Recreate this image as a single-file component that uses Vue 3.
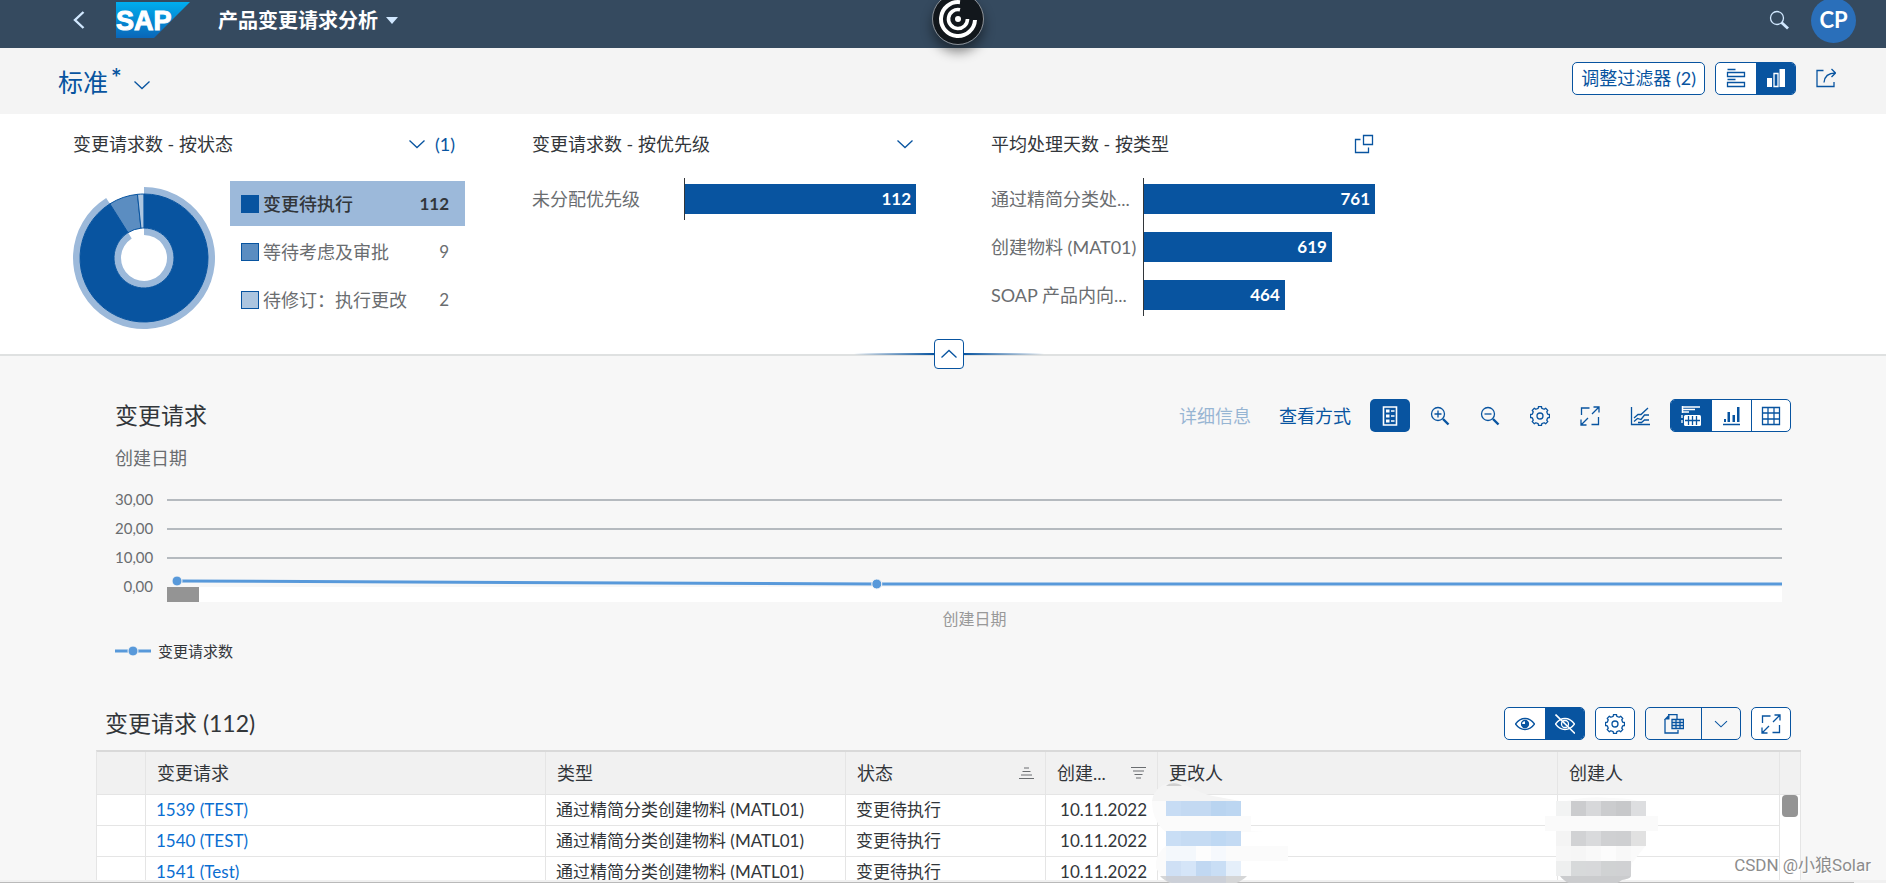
<script setup>
import { ref } from 'vue'

function gearPath(teeth, outer, root) {
  const points = []
  const step = (Math.PI * 2) / teeth
  for (let i = 0; i < teeth; i++) {
    const a = i * step - Math.PI / 2
    const corners = [[-0.3, root], [-0.2, outer], [0.2, outer], [0.3, root]]
    for (const [offset, r] of corners) {
      const t = a + offset * step
      points.push(`${(10 + r * Math.cos(t)).toFixed(2)} ${(10 + r * Math.sin(t)).toFixed(2)}`)
    }
  }
  return `M${points.join('L')}Z`
}
const gear = gearPath(8, 9.6, 7.9)

function ringPath(from, to, inner, outer) {
  const at = (deg, r) => {
    const t = ((deg - 90) * Math.PI) / 180
    return `${(71 + r * Math.cos(t)).toFixed(2)} ${(71 + r * Math.sin(t)).toFixed(2)}`
  }
  const large = to - from > 180 ? 1 : 0
  return `M${at(from, outer)}A${outer} ${outer} 0 ${large} 1 ${at(to, outer)}L${at(to, inner)}A${inner} ${inner} 0 ${large} 0 ${at(from, inner)}Z`
}

const statuses = [
  { label: '变更待执行', value: 112, tone: 'tone-a', selected: true },
  { label: '等待考虑及审批', value: 9, tone: 'tone-b', selected: false },
  { label: '待修订：执行更改', value: 2, tone: 'tone-c', selected: false },
]
const total = statuses.reduce((sum, s) => sum + s.value, 0)
let angle = 0
const slices = statuses.map((s) => {
  const from = angle
  angle += (s.value / total) * 360
  return { ...s, from, to: Math.min(angle, 359.9), path: ringPath(from, Math.min(angle, 359.9), 30, 64) }
})
const halo = [
  ringPath(slices[0].from, slices[0].to, 64, 71),
  ringPath(slices[0].from, slices[0].to, 23, 30),
]

const barPanels = [
  {
    title: '变更请求数 - 按优先级',
    icon: 'chevron-down',
    action: '选择优先级',
    max: 112,
    bars: [{ label: '未分配优先级', value: 112 }],
  },
  {
    title: '平均处理天数 - 按类型',
    icon: 'value-help',
    action: '打开值帮助',
    max: 761,
    bars: [
      { label: '通过精简分类处...', value: 761 },
      { label: '创建物料 (MAT01)', value: 619 },
      { label: 'SOAP 产品内向...', value: 464 },
    ],
  },
]

const chartTools = [
  { icon: 'zoom-in', label: '放大' },
  { icon: 'zoom-out', label: '缩小' },
  { icon: 'gear', label: '设置' },
  { icon: 'full-screen', label: '全屏' },
  { icon: 'line-chart', label: '图表类型' },
]
const viewMode = ref('both')
const viewModes = [
  { id: 'both', icon: 'chart-table', label: '图表和表' },
  { id: 'chart', icon: 'bar-chart', label: '图表' },
  { id: 'table', icon: 'grid', label: '表' },
]

const rows = [
  { id: '1539 (TEST)', type: '通过精简分类创建物料 (MATL01)', status: '变更待执行', date: '10.11.2022' },
  { id: '1540 (TEST)', type: '通过精简分类创建物料 (MATL01)', status: '变更待执行', date: '10.11.2022' },
  { id: '1541 (Test)', type: '通过精简分类创建物料 (MATL01)', status: '变更待执行', date: '10.11.2022' },
]

const mosaic = (lines, x, y) =>
  lines.flatMap((line, r) => line.map((fill, c) => ({ fill, x: x + c * 15, y: y + r * 15 }))).filter((c) => c.fill)

const changedBy = mosaic(
  [
    ['#c7dcf4', '#c3d9f2', '#c3d9f2', '#b9d4f0', '#bcd6f1'],
    [],
    ['#c9def5', '#c5dbf3', '#c5dbf3', '#bed8f3', '#c3daf3'],
    ['#f4f8fc', '#f4f8fc', '#fdfdfd', '#f6f9fd', '#fbfbfb'],
    ['#cfe0f5', '#d5e5f8', '#c1d8f2', '#c9def5', '#e5effa'],
  ],
  18,
  17,
)
const createdBy = mosaic(
  [
    ['#f2f3f3', '#cbccce', '#d7d8da', '#cbccce', '#c7c8ca', '#dddee0'],
    [],
    ['#f4f4f4', '#d1d2d4', '#d9dadc', '#cfd0d2', '#cecfd1', '#e1e1e1'],
    ['#f7f7f7', '#f6f6f6', '#f9f9f9', '#fcfcfc', '#f8f8f8'],
    ['#eeefef', '#d7d9da', '#d7d8da', '#d0d2d3', '#d0d1d3'],
  ],
  8,
  17,
)
</script>

<template>
  <div class="page">
    <svg class="sprite" aria-hidden="true">
      <symbol id="chevron-down" viewBox="0 0 20 20"><path d="M2.500 6.500 10 13.500 17.500 6.500" /></symbol>
      <symbol id="chevron-up" viewBox="0 0 20 20"><path d="M2.500 13.500 10 6.500 17.500 13.500" /></symbol>
      <symbol id="back" viewBox="0 0 20 20"><path d="M15.500 2 7 10 15.500 18" stroke-width="2.400" /></symbol>
      <symbol id="search" viewBox="0 0 20 20"><circle cx="8" cy="8" r="6.500" /><path d="M12.500 12.500 19 18.500" stroke-width="2.800" /></symbol>
      <symbol id="value-help" viewBox="0 0 20 20"><path d="M9.500 1.500h9v9h-9zM6.500 5.500h-5v13h13v-5" /></symbol>
      <symbol id="filter-bar" viewBox="0 0 20 20"><path d="M1.500 1.500h8M1.500 4.500h17v4h-17zM1.500 11.500h8M1.500 14.500h17v4h-17z" /></symbol>
      <symbol id="kpi-chart" viewBox="0 0 20 20"><path d="M1 10h5v9H1zM13.500 1H19v18h-5.500z" fill="currentColor" stroke="none" /><path d="M8 5.500h4v13H8z" /></symbol>
      <symbol id="share" viewBox="0 0 20 20"><path d="M7.500 2.500H1v16h17V14M8 14.500C8.500 8.500 12 5 19.500 5M15.500 1l4 4-4 4" /></symbol>
      <symbol id="legend" viewBox="0 0 20 20"><path d="M3.500 1h13v18h-13z" stroke-width="1.600" /><path d="M6 3.500h3.500v3H6zM6 8.500h3.500v3H6zM6 13.500h3.500v3H6z" fill="currentColor" stroke="none" /><path d="M11 5h3.500M11 10h3.500M11 15h3.500" /></symbol>
      <symbol id="zoom-in" viewBox="0 0 20 20"><circle cx="8" cy="8" r="6.500" /><path d="M4.500 8h7M8 4.500v7" /><path d="m13 13 5.500 5.500" stroke-width="2.400" /></symbol>
      <symbol id="zoom-out" viewBox="0 0 20 20"><circle cx="8" cy="8" r="6.500" /><path d="M4.500 8h7" /><path d="m13 13 5.500 5.500" stroke-width="2.400" /></symbol>
      <symbol id="gear" viewBox="0 0 20 20"><path :d="gear" stroke-linejoin="round" /><circle cx="10" cy="10" r="3" /></symbol>
      <symbol id="full-screen" viewBox="0 0 20 20"><path d="M9.500 2h-8v7M18.500 11v7.500h-7M12 8 19 1M13.500 1H19v5.500M8 12l-7 7M1 13.500V19h5.500" /></symbol>
      <symbol id="line-chart" viewBox="0 0 20 20"><path d="M1.500 1v17.500H20M4 12 8 8.500h3L18 2M4 15.500l3.500-3 3.500 1 3.500-4.500H19M8 16.500h3.500l3-2.500H19" /></symbol>
      <symbol id="chart-table" viewBox="0 0 20 20"><path d="M1.500 0v7M1 1h18M1 3.500h13M1 6h7" stroke-width="1.500" /><rect x="3" y="9" width="17" height="11" rx="1.500" fill="currentColor" stroke="none" /><path d="M1 9v3M1 14v3" /><g stroke="#0854a0"><path d="M7.500 10v9M11.500 10v9M15.500 10v9M4 14.500h15" /></g></symbol>
      <symbol id="bar-chart" viewBox="0 0 20 20"><path d="M1 18.500h17" stroke-width="1.600" /><path d="M2 13h2v3H2zM5.500 6H8v10H5.500zM10.500 9H13v7h-2.500zM15 1h2.500v15H15z" fill="currentColor" stroke="none" /></symbol>
      <symbol id="grid" viewBox="0 0 20 20"><path d="M1.500 1.500h17v17h-17zM7 1.500v17M13 1.500v17M1.500 7h17M1.500 13h17" /></symbol>
      <symbol id="show" viewBox="0 0 20 20"><path d="M.5 10C3 6.500 6.300 4.500 10 4.500s7 2 9.500 5.500C17 13.500 13.700 15.500 10 15.500S3 13.500.5 10Z" /><circle cx="10" cy="10" r="3.500" /><path d="M10 6.500a3.500 3.500 0 1 1-3.500 3.500H10Z" fill="currentColor" stroke="none" /></symbol>
      <symbol id="hide" viewBox="0 0 20 20"><path d="M.5 10C3 6.500 6.300 4.500 10 4.500s7 2 9.500 5.500C17 13.500 13.700 15.500 10 15.500S3 13.500.5 10Z" /><circle cx="10" cy="10" r="3.500" /><path d="m.5.5 19.500 19" stroke-width="1.600" /></symbol>
      <symbol id="export" viewBox="0 0 20 20"><path d="M4 .500h9V5M1 5v14h13v-3" /><path d="M0 5.500 5.500 0v5.500z" fill="currentColor" stroke="none" /><path d="M8 5.500h11.500v9H8zM8 8.500h11.500M8 11.500h11.500M12 5.500v9M16 5.500v9" /></symbol>
    </svg>

    <header class="shell">
      <button class="plain back" aria-label="返回"><svg class="icon"><use href="#back" /></svg></button>
      <svg class="logo" viewBox="0 0 74 36" role="img" aria-label="SAP">
        <defs>
          <linearGradient id="logo-fill" x1="0" y1="0" x2="0" y2="1">
            <stop offset="0" stop-color="#00aeef" />
            <stop offset="1" stop-color="#0a66b8" />
          </linearGradient>
        </defs>
        <path d="M0 0h74L38 36H0z" fill="url(#logo-fill)" />
        <text class="logo-text" x="0" y="28">SAP</text>
      </svg>
      <button class="plain app-title">产品变更请求分析<span class="caret"></span></button>
      <span class="assist">
        <svg viewBox="0 0 52 52">
          <circle cx="26" cy="26" r="25.500" fill="#12171c" stroke="#8b9096" />
          <g fill="none" stroke="#fff">
            <path d="M28 9.200A17 17 0 1 0 43 27" stroke-width="4" />
            <path d="M28 16.700A9.500 9.500 0 1 0 35.500 26" stroke-width="3.600" />
          </g>
          <circle cx="26" cy="26" r="3" fill="#fff" />
        </svg>
      </span>
      <button class="plain search" aria-label="搜索"><svg class="icon"><use href="#search" /></svg></button>
      <button class="plain avatar">CP</button>
    </header>

    <div class="variant-bar">
      <button class="plain variant">标准<span class="star">*</span><svg class="icon"><use href="#chevron-down" /></svg></button>
      <button class="btn adjust">调整过滤器 (2)</button>
      <div class="segmented">
        <button class="seg" aria-label="过滤器栏"><svg class="icon"><use href="#filter-bar" /></svg></button>
        <button class="seg on" aria-label="可视化过滤器"><svg class="icon"><use href="#kpi-chart" /></svg></button>
      </div>
      <button class="plain share" aria-label="共享"><svg class="icon"><use href="#share" /></svg></button>
    </div>

    <section class="filters">
      <article>
        <div class="filter-head">
          <h3>变更请求数 - 按状态</h3>
          <button class="plain picker"><svg class="icon"><use href="#chevron-down" /></svg>(1)</button>
        </div>
        <div class="donut-body">
          <svg class="donut" viewBox="0 0 142 142">
            <path v-for="d in halo" :key="d" :d="d" class="halo" />
            <path v-for="s in slices" :key="s.label" :d="s.path" :class="['slice', s.tone]" />
          </svg>
          <ul class="status-list">
            <li v-for="s in statuses" :key="s.label" :class="{ selected: s.selected }">
              <span :class="['swatch', s.tone]"></span>
              <span class="status-label">{{ s.label }}</span>
              <span class="status-value">{{ s.value }}</span>
            </li>
          </ul>
        </div>
      </article>
      <article v-for="p in barPanels" :key="p.title" class="bar-panel">
        <div class="filter-head">
          <h3>{{ p.title }}</h3>
          <button class="plain picker" :aria-label="p.action"><svg class="icon"><use :href="'#' + p.icon" /></svg></button>
        </div>
        <div class="bar-body">
          <div class="bar-labels"><span v-for="b in p.bars" :key="b.label">{{ b.label }}</span></div>
          <div class="bar-plot">
            <div v-for="b in p.bars" :key="b.label" class="bar" :style="{ width: (b.value / p.max) * 100 + '%' }">{{ b.value }}</div>
          </div>
        </div>
      </article>
      <button class="collapse" aria-label="折叠标题"><svg class="icon"><use href="#chevron-up" /></svg></button>
    </section>

    <section class="chart-section">
      <div class="toolbar">
        <h2>变更请求</h2>
        <button class="plain text-btn" disabled>详细信息</button>
        <button class="plain text-btn">查看方式</button>
        <button class="tool on" aria-label="图例"><svg class="icon"><use href="#legend" /></svg></button>
        <button v-for="t in chartTools" :key="t.icon" class="tool" :aria-label="t.label"><svg class="icon"><use :href="'#' + t.icon" /></svg></button>
        <div class="segmented">
          <button v-for="m in viewModes" :key="m.id" :class="['seg', { on: viewMode === m.id }]" :aria-label="m.label" @click="viewMode = m.id">
            <svg class="icon"><use :href="'#' + m.icon" /></svg>
          </button>
        </div>
      </div>
      <p class="dimension">创建日期</p>
      <div class="chart">
        <div class="y-axis"><span>30,00</span><span>20,00</span><span>10,00</span><span>0,00</span></div>
        <div class="plot">
          <svg class="lines" height="96">
            <g stroke="#b5babf" stroke-width="2">
              <line x1="0" x2="100%" y1="9" y2="9" />
              <line x1="0" x2="100%" y1="38" y2="38" />
              <line x1="0" x2="100%" y1="67" y2="67" />
            </g>
            <g stroke="#5899da" stroke-width="3">
              <line x1="0.620%" y1="90" x2="43.950%" y2="93" />
              <line x1="43.950%" y1="93" x2="100%" y2="93" />
            </g>
            <g fill="#5899da" stroke="#f7f7f7" stroke-width="1">
              <circle cx="0.620%" cy="90" r="5" />
              <circle cx="43.950%" cy="93" r="5" />
            </g>
          </svg>
          <div class="h-scroll"><div class="h-thumb"></div></div>
          <p class="axis-title">创建日期</p>
        </div>
      </div>
      <div class="legend">
        <svg width="36" height="12"><path d="M0 6h36" stroke="#5899da" stroke-width="3" /><circle cx="18" cy="6" r="5" fill="#5899da" stroke="#f7f7f7" stroke-width="1" /></svg>
        变更请求数
      </div>
    </section>

    <section class="table-section">
      <div class="toolbar table-toolbar">
        <h2>变更请求 (112)</h2>
        <div class="segmented">
          <button class="seg" aria-label="显示详细信息"><svg class="icon"><use href="#show" /></svg></button>
          <button class="seg on" aria-label="隐藏详细信息"><svg class="icon"><use href="#hide" /></svg></button>
        </div>
        <button class="btn square" aria-label="设置"><svg class="icon"><use href="#gear" /></svg></button>
        <div class="segmented clear">
          <button class="seg wide" aria-label="导出"><svg class="icon"><use href="#export" /></svg></button>
          <button class="seg" aria-label="导出选项"><svg class="icon small"><use href="#chevron-down" /></svg></button>
        </div>
        <button class="btn square" aria-label="全屏"><svg class="icon"><use href="#full-screen" /></svg></button>
      </div>
      <table>
        <colgroup>
          <col class="c-select" /><col class="c-wide" /><col class="c-type" /><col class="c-status" />
          <col class="c-date" /><col class="c-wide" /><col class="c-author" /><col class="c-scroll" />
        </colgroup>
        <thead>
          <tr>
            <th></th>
            <th>变更请求</th>
            <th>类型</th>
            <th><div class="th">状态<svg width="15" height="12" viewBox="0 0 15 12"><path d="M5 1h5M3.500 4.500h8M2 8h11M0 11.500h15" /></svg></div></th>
            <th><div class="th">创建...<svg width="15" height="12" viewBox="0 0 15 12"><path d="M0 .5h15M2 4h11M3.500 7.500h8M5 11h5" /></svg></div></th>
            <th>更改人</th>
            <th>创建人</th>
            <th></th>
          </tr>
        </thead>
        <tbody>
          <tr v-for="(r, i) in rows" :key="r.id">
            <td></td>
            <td><a href="#">{{ r.id }}</a></td>
            <td>{{ r.type }}</td>
            <td>{{ r.status }}</td>
            <td class="date">{{ r.date }}</td>
            <td class="person">
              <svg v-if="i === 0" class="mask changed" width="146" height="107" viewBox="0 -7 146 107">
                <path d="M4 17C6 4 16-1 25-1c15 0 24 10 40 13l27 5Z" fill="#f4f4f4" />
                <path d="M4 17h89v15h10v15l15 0-95 5C10 44 4 32 4 17ZM19 56l-1 6C10 68 7 76 8 84l5 8h80V77h47V62H93V47H24Z" fill="#fbfbfb" />
                <path d="M18 2c4-4 13-3 16 0Z" fill="#cfcfcf" />
                <rect v-for="c in changedBy" :key="c.x + '-' + c.y" :x="c.x" :y="c.y" width="15" height="15" :fill="c.fill" />
                <path d="M12 92h87c-4 4-9 7-14 8H26c-6-1-10-4-14-8Z" fill="#d5d6d7" />
                <path d="M18 92h60v8H26l-8-4Z" fill="#ccd0d8" />
              </svg>
            </td>
            <td class="person">
              <svg v-if="i === 0" class="mask created" width="124" height="107" viewBox="-7 -7 124 107">
                <path d="M8 20Q35 11 62 14q30 0 36 8v10h12v15H98v14L84 79c0 8-6 14-18 14H14C8 86 6 70 10 47H-3V32H8Z" fill="#fafafa" />
                <rect v-for="c in createdBy" :key="c.x + '-' + c.y" :x="c.x" :y="c.y" width="15" height="15" :fill="c.fill" />
                <path d="M12 92h71c-1 3-5 3-9 4l-6 4H24c-5-1-9-4-12-8Z" fill="#cbccce" />
              </svg>
            </td>
            <td v-if="i === 0" :rowspan="rows.length" class="v-scroll"><div class="v-thumb"></div></td>
          </tr>
        </tbody>
      </table>
    </section>
    <footer class="edge"></footer>
    <span class="watermark">CSDN @小狼Solar</span>
  </div>
</template>

<style>
body {
  margin: 0;
  background: #f7f7f7;
}
</style>

<style scoped>
.page {
  position: relative;
  display: flex;
  flex-direction: column;
  height: 100vh;
  overflow: hidden;
  background: #f7f7f7;
  color: #32363a;
  font: 18px/26px Lato, "Noto Sans CJK SC", sans-serif;
}
.page * { box-sizing: border-box; }
.sprite { position: absolute; width: 0; height: 0; }
h2, h3, p, ul { margin: 0; padding: 0; font-weight: 400; }
ul { list-style: none; }
button { font: inherit; color: #0854a0; cursor: pointer; padding: 0; white-space: nowrap; }
.plain { border: 0; background: none; }
.icon {
  display: block;
  flex: none;
  width: 20px;
  height: 20px;
  fill: none;
  stroke: currentColor;
  stroke-width: 1.300;
}
.icon.small { width: 16px; height: 16px; }

.shell {
  position: relative;
  flex: none;
  display: flex;
  align-items: center;
  height: 48px;
  padding: 0 30px 8px 68px;
  background: #354a5f;
}
.back { color: #d1e8ff; margin-right: 28px; }
.logo { width: 74px; height: 36px; margin-right: 28px; }
.logo-text { font: 900 27px "Liberation Sans", sans-serif; fill: #fff; stroke: #fff; stroke-width: 1; }
.app-title { display: flex; align-items: center; color: #fff; font-size: 20px; font-weight: 700; }
.caret { margin-left: 8px; border: 6px solid transparent; border-top: 7px solid #d1e8ff; border-bottom: 0; }
.assist { position: absolute; z-index: 2; top: -7px; left: 50.800%; width: 52px; height: 52px; margin-left: -26px; border-radius: 50%; box-shadow: 0 7px 12px rgba(0, 0, 0, .45); }
.assist svg { display: block; }
.search { margin-left: auto; color: #d1e8ff; }
.avatar { flex: none; width: 45px; height: 45px; margin-left: 22px; border-radius: 50%; background: #2a6fba; color: #fff; font-size: 22px; font-weight: 700; }

.variant-bar { flex: none; display: flex; align-items: center; gap: 10px; height: 66px; padding: 0 50px 6px 58px; background: #f4f4f4; }
.variant { display: flex; align-items: center; margin-right: auto; font-size: 25px; line-height: 36px; padding-top: 8px; }
.star { margin: -10px 10px 0 3px; font-weight: 700; }
.variant .icon { margin-top: 5px; }
.btn, .segmented { flex: none; height: 33px; border: 1px solid #0854a0; border-radius: 5px; background: #fff; }
.btn { display: flex; align-items: center; justify-content: center; }
.adjust { padding: 0 8px; }
.segmented { display: flex; overflow: hidden; }
.seg { display: flex; align-items: center; justify-content: center; width: 40px; height: 100%; border: 0; background: transparent; }
.seg:last-child { width: 39px; }
.seg + .seg { border-left: 1px solid #0854a0; }
.on { background: #0854a0; color: #fff; }
.clear { background: transparent; }
.wide { width: 55px; }
.square { width: 40px; }
.share { margin-left: 10px; }

.filters {
  position: relative;
  flex: none;
  display: grid;
  grid-template-columns: repeat(3, minmax(0, 392px));
  column-gap: 67px;
  padding: 16px 73px 25px;
  background: #fff;
  border-bottom: 2px solid #dfe1e1;
}
.filter-head { display: flex; align-items: center; justify-content: space-between; height: 28px; margin-bottom: 20px; }
h3 { font-size: 18px; }
.picker { display: flex; align-items: center; gap: 8px; margin-right: 10px; }
.bar-panel { padding-right: 8px; }
.bar-panel .picker { margin-right: 1px; }
.donut-body { display: flex; gap: 15px; }
.donut { flex: none; width: 142px; height: 142px; margin-top: 9px; }
.halo { fill: #9cb9da; }
.slice { stroke: #0854a0; stroke-width: 1; }
.tone-a { fill: #0854a0; background: #0854a0; }
.tone-b { fill: #5b8dc1; background: #5b8dc1; }
.tone-c { fill: #adc6e0; background: #adc6e0; }
.status-list { flex: 1; display: flex; flex-direction: column; gap: 3px; margin-top: 3px; }
.status-list li { display: flex; align-items: center; height: 45px; padding: 0 16px 0 11px; color: #6a6d70; }
.status-list .selected { background: #9cb9da; color: #32363a; font-weight: 500; }
.selected .status-value { font-weight: 700; }
.swatch { width: 18px; height: 18px; margin-right: 4px; border: 1px solid #0854a0; }
.status-value { margin-left: auto; font-size: 17px; }
.bar-body { display: flex; }
.bar-labels { display: flex; flex-direction: column; gap: 18px; width: 152px; padding-top: 6px; color: #6a6d70; }
.bar-labels span { height: 30px; line-height: 30px; white-space: nowrap; }
.bar-plot { flex: 1; align-self: flex-start; display: flex; flex-direction: column; gap: 18px; padding: 6px 0; border-left: 1px solid #32363a; }
.bar { height: 30px; padding-right: 5px; background: #0854a0; color: #fff; font-size: 17px; font-weight: 700; line-height: 30px; text-align: right; }
.collapse {
  position: absolute;
  left: 50.300%;
  bottom: -15px;
  z-index: 1;
  display: flex;
  align-items: center;
  justify-content: center;
  width: 30px;
  height: 30px;
  margin-left: -15px;
  border: 1px solid #0854a0;
  border-radius: 4px;
  background: #fff;
}
.collapse::before, .collapse::after { content: ""; position: absolute; top: 13px; width: 80px; height: 2px; }
.collapse::before { right: 29px; background: linear-gradient(to left, #0854a0, transparent); }
.collapse::after { left: 29px; background: linear-gradient(to right, #0854a0, transparent); }

.chart-section { flex: none; padding: 43px 95px 0 115px; }
.toolbar { display: flex; align-items: center; gap: 10px; height: 33px; }
h2 { margin-right: auto; font-size: 23px; line-height: 33px; }
.text-btn { margin-right: 18px; }
.text-btn + .text-btn { margin-right: 9px; }
.text-btn:disabled { color: #0854a0; opacity: .4; }
.tool { display: flex; align-items: center; justify-content: center; width: 40px; height: 33px; border: 0; border-radius: 5px; background: transparent; }
.tool.on { background: #0854a0; }
.dimension { margin-top: 13px; color: #6a6d70; }
.chart { display: flex; gap: 14px; margin: 14px 9px 0 0; }
.y-axis { display: flex; flex-direction: column; width: 38px; color: #6a6d70; font-size: 15px; line-height: 29px; text-align: right; }
.plot { flex: 1; padding-top: 6px; }
.lines { display: block; width: 100%; overflow: visible; }
.h-scroll { height: 15px; background: #fff; }
.h-thumb { width: 2%; height: 15px; background: #949494; }
.axis-title { margin-top: 5px; color: #999; font-size: 16px; line-height: 24px; text-align: center; }
.legend { display: flex; align-items: center; gap: 7px; margin-top: 8px; font-size: 15px; line-height: 24px; }

.table-section { flex: 1; min-height: 0; padding: 44px 85px 0 96px; }
.table-toolbar { height: 33px; margin: 0 10px 10px 9px; }
table { width: 100%; table-layout: fixed; border-collapse: separate; border-spacing: 0; border-top: 2px solid #d9d9d9; border-left: 1px solid #e5e5e5; background: #fff; }
.c-select { width: 49px; }
.c-wide { width: 400px; }
.c-type { width: 300px; }
.c-status { width: 200px; }
.c-date { width: 112px; }
.c-author { width: 222px; }
.c-scroll { width: 21px; }
th, td { border-right: 1px solid #e5e5e5; border-bottom: 1px solid #e5e5e5; text-align: left; white-space: nowrap; }
th { height: 43px; padding: 0 11px; background: #f1f1f1; font-weight: 400; }
td { height: 31px; padding: 0 10px; font-size: 17px; line-height: 24px; }
.th { display: flex; align-items: center; justify-content: space-between; }
.th svg { stroke: #6a6d70; }
td a { color: #0a6ed1; text-decoration: none; }
.date { text-align: right; }
.person { position: relative; }
.mask { position: absolute; z-index: 1; }
.changed { left: -10px; top: -18px; }
.created { left: -17px; top: -18px; }
.v-scroll { padding: 0 2px; vertical-align: top; }
.v-thumb { width: 16px; height: 22px; border-radius: 4px; background: #949494; }
.edge { position: relative; flex: none; height: 3px; border-top: 2px solid #f0f0f0; background: linear-gradient(to right, #b9b9b9 98.300%, #f0f0f0 98.300%); background-clip: padding-box; }
.watermark { position: absolute; z-index: 3; right: 15px; bottom: 6px; color: #8c8c8c; font: 17px/24px Roboto, "Noto Sans CJK SC", sans-serif; text-shadow: 1px 1px 0 #fff; }
</style>
